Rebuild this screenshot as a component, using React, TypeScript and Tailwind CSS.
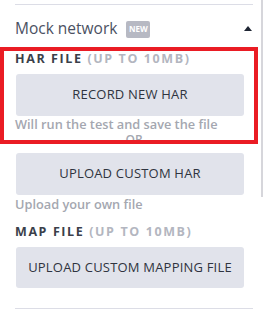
export default function App() {
  return (
    <div className="relative w-[264px] h-[318px] overflow-hidden bg-white font-['Open_Sans','Liberation_Sans',sans-serif]">
      <div className="ml-[15px] w-[238px] flex flex-col">
        {/* top divider */}
        <div className="mt-[4px] h-px bg-[#dcdde6]" />

        {/* section header */}
        <div className="mt-[11px] h-[24px] flex items-center">
          <span className="text-[15.5px] leading-[24px] text-[#4b5162]">Mock network</span>
          <span className="ml-[9px] mt-[2px] h-[17px] w-[24px] rounded-[2px] bg-[#b7b9c3] flex items-center justify-center text-[8px] font-bold text-white">
            NEW
          </span>
          <svg className="ml-auto mr-px" width="8" height="5" viewBox="0 0 8 5">
            <path d="M4 0L8 5H0Z" fill="#1f2533" />
          </svg>
        </div>

        {/* HAR file */}
        <div className="mt-[11px] text-[12.5px] leading-[16px] font-bold tracking-[1.6px] text-[#3b3f4a]">
          HAR FILE <span className="text-[#b3b6c0]">(UP TO 10MB)</span>
        </div>
        <button className="mt-[7px] ml-px w-[228px] h-[42px] rounded-[3px] bg-[#e1e3eb] text-[13px] tracking-[0.2px] text-[#2f3440]">
          RECORD NEW HAR
        </button>
        <div className="mt-px text-[12.75px] leading-[15px] font-semibold text-[#a4a7b0]">
          Will run the test and save the file
        </div>
        <div className="text-center text-[12px] leading-[16px] font-semibold text-[#a4a7b0]">OR</div>
        <button className="mt-[5px] ml-px w-[228px] h-[42px] rounded-[3px] bg-[#e1e3eb] text-[13px] tracking-[0.2px] text-[#2f3440]">
          UPLOAD CUSTOM HAR
        </button>
        <div className="mt-px text-[12.75px] leading-[16px] font-semibold text-[#a4a7b0]">Upload your own file</div>

        {/* MAP file */}
        <div className="mt-[12px] text-[12.5px] leading-[16px] font-bold tracking-[1.6px] text-[#3b3f4a]">
          MAP FILE <span className="text-[#b3b6c0]">(UP TO 10MB)</span>
        </div>
        <button className="mt-[7px] ml-px w-[228px] h-[41px] rounded-[3px] bg-[#e1e3eb] text-[13px] tracking-[0.2px] text-[#2f3440]">
          UPLOAD CUSTOM MAPPING FILE
        </button>

        {/* bottom divider */}
        <div className="mt-[20px] h-px bg-[#dcdde6]" />
      </div>

      {/* highlight overlay */}
      <div className="absolute left-0 top-[47px] w-[258px] h-[97px] border-4 border-[#ea1c24] pointer-events-none" />
      {/* scrollbar */}
      <div className="absolute right-px top-0 w-[2px] h-[197px] bg-[#d6d6db]" />
    </div>
  );
}
